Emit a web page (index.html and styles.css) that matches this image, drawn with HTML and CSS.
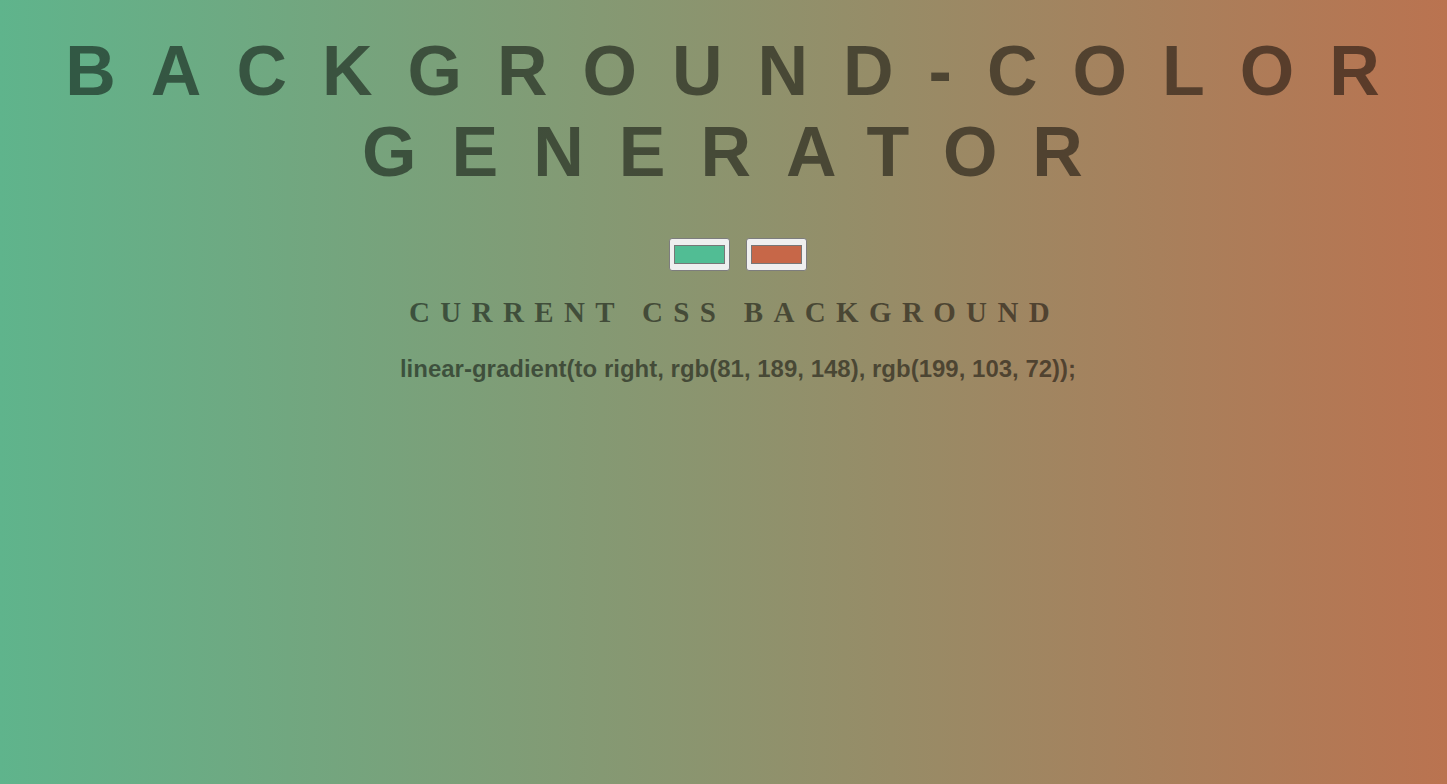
FILE: index.html
```html
<!DOCTYPE html>
<html>
<head>
<meta charset="utf-8">
<title>Background-Color Generator</title>
<link rel="stylesheet" href="styles.css">
</head>
<body>
<div class="page">
  <h1 class="title">Background-Color Generator</h1>
  <div class="pickers">
    <div class="picker"><span class="swatch swatch-green"></span></div>
    <div class="picker"><span class="swatch swatch-red"></span></div>
  </div>
  <h3 class="subtitle">Current CSS Background</h3>
  <p class="code">linear-gradient(to right, rgb(81, 189, 148), rgb(199, 103, 72));</p>
</div>
</body>
</html>
```

FILE: styles.css
```css
html, body {
  margin: 0;
  padding: 0;
  height: 100%;
}

body {
  background: linear-gradient(to right, #5fb48c, #ba7350);
  color: rgba(0, 0, 0, 0.5);
  font-family: "Liberation Sans", Arial, sans-serif;
}

.page {
  padding: 31px 0 0 29px;
  text-align: center;
}

.title {
  margin: 0;
  padding-left: 4px;
  font-size: 70px;
  font-weight: bold;
  letter-spacing: 35px;
  text-transform: uppercase;
  line-height: 81px;
}

.pickers {
  display: flex;
  justify-content: center;
  gap: 16px;
  margin-top: 45px;
}

.picker {
  box-sizing: border-box;
  width: 61px;
  height: 33px;
  padding: 6px 4px;
  border: 1px solid #7d7d7d;
  border-radius: 3px;
  background: #efefef;
}

.swatch {
  display: block;
  box-sizing: border-box;
  width: 51px;
  height: 19px;
  border: 1px solid #777777;
}

.swatch-green {
  background: #51bd94;
}

.swatch-red {
  background: #c76748;
}

.subtitle {
  margin: 25px 0 0;
  padding-right: 7px;
  font-family: "Liberation Serif", "Times New Roman", serif;
  font-size: 29px;
  font-weight: bold;
  letter-spacing: 10.35px;
  text-transform: uppercase;
  line-height: 33px;
}

.code {
  margin: 28px 0 0;
  font-size: 24px;
  font-weight: bold;
  line-height: 24px;
}
```
